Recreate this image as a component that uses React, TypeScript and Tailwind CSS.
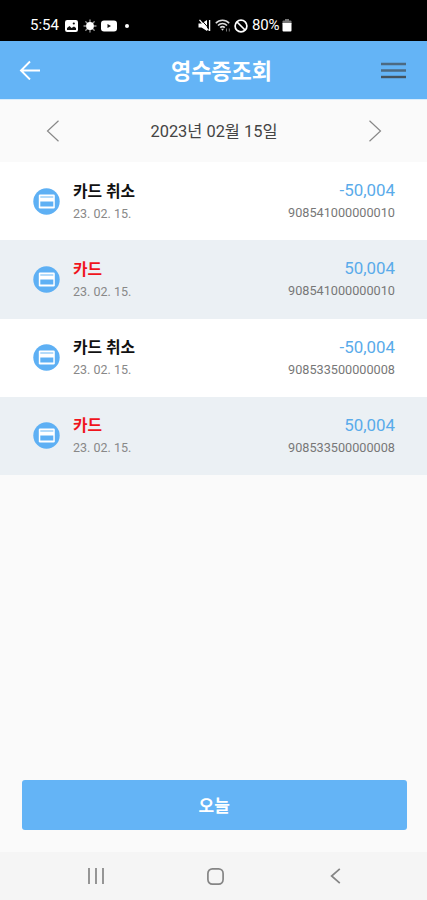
import { clsx } from 'clsx';

interface Receipt {
  id: number;
  label: string;
  cancelled: boolean;
  date: string;
  amount: string;
  number: string;
}

const receipts: Receipt[] = [
  { id: 1, label: '카드 취소', cancelled: true, date: '23. 02. 15.', amount: '-50,004', number: '908541000000010' },
  { id: 2, label: '카드', cancelled: false, date: '23. 02. 15.', amount: '50,004', number: '908541000000010' },
  { id: 3, label: '카드 취소', cancelled: true, date: '23. 02. 15.', amount: '-50,004', number: '908533500000008' },
  { id: 4, label: '카드', cancelled: false, date: '23. 02. 15.', amount: '50,004', number: '908533500000008' },
];

const StatusBar = () => (
  <div className="flex h-[41px] shrink-0 items-center bg-black pt-[10px] pl-[30px] text-white">
    <span className="w-[35px] text-[15px] leading-none">5:54</span>

    {/* Gallery */}
    <svg className="h-3 w-[13px]" viewBox="0 0 13 12">
      <rect width="13" height="12" rx="2.2" fill="#fff" />
      <path d="M2 10V8l2.500-2 2 2L9 6.500 11 8v2z" fill="#111" />
      <circle cx="8.800" cy="3.500" r="1.100" fill="#111" />
    </svg>

    {/* Brightness */}
    <svg className="ml-[5px] h-[14px] w-[14px]" viewBox="0 0 14 14" stroke="#999" strokeWidth="1.300" strokeLinecap="round">
      <path d="M7 1v12M1 7h12M2.800 2.800l8.400 8.400M11.200 2.800l-8.400 8.400" />
      <circle cx="7" cy="7" r="3.900" fill="#fff" stroke="none" />
    </svg>

    {/* YouTube */}
    <svg className="ml-1 h-3 w-4" viewBox="0 0 16 12">
      <rect y="0.500" width="16" height="11" rx="3" fill="#fff" />
      <path d="M6.500 4v4L10 6z" fill="#111" />
    </svg>
    <span className="ml-[8px] h-1 w-1 rounded-full bg-white" />

    {/* Muted */}
    <svg className="ml-[69px] h-[13px] w-[13px]" viewBox="0 0 13 13" fill="#fff">
      <path d="M0.500 4.500h3L9 1v11L3.500 8.500h-3z" />
      <path d="M3 0.500l8 9" stroke="#000" strokeWidth="1" />
      <path d="M1.500 0.800l9 10.500M11.600 1v11" stroke="#fff" strokeWidth="1.300" fill="none" />
    </svg>

    {/* Wi-Fi */}
    <svg className="ml-1 h-[13px] w-4" viewBox="0 0 16 13" fill="none" stroke="#ddd" strokeWidth="1.600">
      <path d="M0.800 4.200C4.500 0.300 10.500 0.300 14.200 4.200M3 6.500c2.600-2.600 6.400-2.600 9 0M5.200 8.700c1.400-1.300 3.200-1.300 4.600 0" />
      <path d="M6 9.800l1.500 2L9 9.800z" fill="#ddd" stroke="none" />
      <path d="M11.500 9.500v3M14.300 9.500v3" stroke="#777" strokeWidth="1" />
    </svg>

    {/* Blocked */}
    <svg className="ml-[3px] h-[14px] w-[14px]" viewBox="0 0 14 14" fill="none" stroke="#fff" strokeWidth="1.700">
      <circle cx="7" cy="7" r="5.900" />
      <path d="M3 3l8 8" />
    </svg>
    <span className="ml-1 w-[30px] text-[15px] leading-none tracking-[-0.2px]">80%</span>

    {/* Battery */}
    <svg className="h-[13px] w-[10px]" viewBox="0 0 10 13">
      <path d="M3 0h4v2H3z" fill="#777" />
      <rect x="0.500" y="1.500" width="9" height="4" rx="1" fill="#777" />
      <path d="M0.500 4h9v7.500a1 1 0 0 1-1 1h-7a1 1 0 0 1-1-1z" fill="#fff" />
    </svg>
  </div>
);

const Header = () => (
  <header className="flex h-[58px] shrink-0 items-center bg-[#64b4f6] pr-[21px] pl-[19px]">
    <button type="button" aria-label="뒤로">
      <svg className="h-5 w-[22px]" viewBox="0 0 22 20" fill="none" stroke="#fff" strokeWidth="1.900">
        <path d="M21 10.500H2M11 1.500l-9 9 9 9" />
      </svg>
    </button>
    <h1 className="flex-1 pt-[3px] pl-[21px] text-center text-[22px] leading-none font-bold text-white">영수증조회</h1>
    <button type="button" aria-label="메뉴">
      <svg className="h-[17px] w-[25px]" viewBox="0 0 25 17" strokeWidth="2.400">
        <path d="M0 2h25M0 8.500h25" stroke="#4c6a82" />
        <path d="M0 15h25" stroke="#45545f" />
      </svg>
    </button>
  </header>
);

const DatePicker = () => (
  <div className="flex h-[63px] shrink-0 items-center justify-between border-t border-[#d9edfc] pr-[45px] pl-[46px]">
    <button type="button" aria-label="이전">
      <svg className="h-[22px] w-[13px]" viewBox="0 0 13 22" fill="none" stroke="#888" strokeWidth="1.200">
        <path d="M12.500 0.800L1.500 11l11 10.200" />
      </svg>
    </button>
    <span className="pt-[3px] text-[16.400px] leading-none text-[#444]">2023년 02월 15일</span>
    <button type="button" aria-label="다음">
      <svg className="h-[22px] w-[13px]" viewBox="0 0 13 22" fill="none" stroke="#888" strokeWidth="1.200">
        <path d="M0.500 0.800L11.500 11l-11 10.200" />
      </svg>
    </button>
  </div>
);

const CardIcon = () => (
  <svg className="h-[27px] w-[27px]" viewBox="0 0 27 27">
    <circle cx="13.500" cy="13.500" r="13.200" fill="#5eb0f4" />
    <rect x="5.800" y="6.600" width="16" height="13.800" rx="1.200" fill="#fff" />
    <path d="M7.300 9h13" stroke="#8cc7f8" strokeWidth="1.300" />
    <path d="M7.300 13.500h13v5h-13z" fill="#5eb0f4" />
  </svg>
);

const ReceiptRow = ({ receipt, shaded }: { receipt: Receipt; shaded: boolean }) => (
  <li className={clsx('flex h-[78.25px] items-center pr-8 pl-[33px]', shaded ? 'bg-[#ebf0f4]' : 'bg-white')}>
    <CardIcon />
    <div className="ml-[13px] flex flex-1 flex-col pt-[3px]">
      <span className={clsx('text-[15.8px] leading-[22px] font-bold', receipt.cancelled ? 'text-[#111]' : 'text-[#f0141c]')}>
        {receipt.label}
      </span>
      <span className="text-[12.5px] leading-[22px] text-[#888]">{receipt.date}</span>
    </div>
    <div className="flex flex-col items-end pt-[2px]">
      <span className="text-[16.9px] leading-[21px] text-[#5aabea]">{receipt.amount}</span>
      <span className="pt-px text-[12.7px] leading-[22px] text-[#777]">{receipt.number}</span>
    </div>
  </li>
);

const NavigationBar = () => (
  <nav className="flex h-12 shrink-0 items-center bg-[#f5f5f5] pl-[88px]">
    <svg className="h-4 w-4" viewBox="0 0 16 16" stroke="#8c8c8c" strokeWidth="1.800">
      <path d="M1 0v16M8 0v16M15 0v16" />
    </svg>
    <svg className="ml-[103px] h-[17px] w-[17px]" viewBox="0 0 17 17" fill="none" stroke="#858585" strokeWidth="1.700">
      <rect x="0.900" y="0.900" width="15.200" height="15.200" rx="4.500" />
    </svg>
    <svg className="ml-[106px] h-4 w-[11px]" viewBox="0 0 11 16" fill="none" stroke="#858585" strokeWidth="1.700">
      <path d="M9.800 0.800L1.600 8l8.200 7.200" />
    </svg>
  </nav>
);

export default function App() {
  return (
    <div className="flex h-[900px] w-[427px] flex-col overflow-hidden bg-[#fafafa] font-[Roboto,'Noto_Sans_CJK_KR',sans-serif]">
      <StatusBar />
      <Header />
      <DatePicker />
      <ul className="flex-1">
        {receipts.map((receipt, index) => (
          <ReceiptRow key={receipt.id} receipt={receipt} shaded={index % 2 === 1} />
        ))}
      </ul>
      <div className="pr-5 pb-[22px] pl-[21.500px]">
        <button type="button" className="h-[50px] w-full rounded-[3px] bg-[#64b4f6] pt-[3px] text-[17px] font-bold text-white">
          오늘
        </button>
      </div>
      <NavigationBar />
    </div>
  );
}
